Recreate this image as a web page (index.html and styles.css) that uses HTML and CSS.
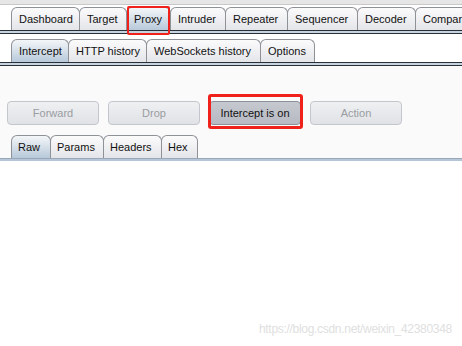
FILE: index.html
```html
<!DOCTYPE html>
<html lang="en">
<head>
    <meta charset="UTF-8">
    <title>Burp Proxy</title>
    <link rel="stylesheet" href="styles.css">
</head>
<body>
    <div class="top-strip"></div>

    <div class="tabs main-tabs">
        <div class="tab">Dashboard</div>
        <div class="tab">Target</div>
        <div class="tab selected marked">Proxy</div>
        <div class="tab">Intruder</div>
        <div class="tab">Repeater</div>
        <div class="tab">Sequencer</div>
        <div class="tab">Decoder</div>
        <div class="tab">Comparer</div>
    </div>
    <div class="tab-rule"></div>

    <div class="tabs sub-tabs">
        <div class="tab selected">Intercept</div>
        <div class="tab">HTTP history</div>
        <div class="tab">WebSockets history</div>
        <div class="tab">Options</div>
    </div>
    <div class="tab-rule"></div>

    <div class="intercept-panel">
        <div class="buttons">
            <div class="btn disabled">Forward</div>
            <div class="btn disabled">Drop</div>
            <div class="btn on marked-btn">Intercept is on</div>
            <div class="btn disabled">Action</div>
        </div>

        <div class="tabs msg-tabs">
            <div class="tab selected">Raw</div>
            <div class="tab">Params</div>
            <div class="tab">Headers</div>
            <div class="tab">Hex</div>
        </div>
    </div>
    <div class="msg-rule"></div>

    <div class="editor"></div>

    <div class="watermark">https://blog.csdn.net/weixin_42380348</div>
</body>
</html>
```

FILE: styles.css
```css
body {
    margin: 0;
    width: 462px;
    height: 346px;
    overflow: hidden;
    background: #ffffff;
    font-family: "Liberation Sans", Arial, sans-serif;
    font-size: 11px;
    color: #111;
    position: relative;
}
.top-strip {
    height: 4px;
    background: #e6e6e6;
    border-bottom: 1px solid #c8c8c8;
}
.tabs {
    display: flex;
    padding-left: 11px;
    white-space: nowrap;
}
.main-tabs {
    margin-top: 2px;
}
.sub-tabs {
    margin-top: 5px;
}
.tab {
    position: relative;
    flex: none;
    height: 22px;
    line-height: 22px;
    padding: 0 7px;
    border: 1px solid #8e9297;
    border-bottom: none;
    border-radius: 6px 6px 0 0;
    background: linear-gradient(#fbfbfc, #e4e5e9);
    margin-right: -1px;
}
.tab.selected {
    background: linear-gradient(#f4f6f8, #b7c9da);
}
.main-tabs .tab:nth-child(1) { width: 53px; }
.main-tabs .tab:nth-child(2) { width: 32px; }
.main-tabs .tab:nth-child(3) { width: 29px; }
.main-tabs .tab:nth-child(4) { width: 40px; }
.main-tabs .tab:nth-child(5) { width: 47px; }
.main-tabs .tab:nth-child(6) { width: 55px; }
.main-tabs .tab:nth-child(7) { width: 43px; }
.main-tabs .tab:nth-child(8) { width: 60px; }
.sub-tabs .tab:nth-child(1) { width: 42px; }
.sub-tabs .tab:nth-child(2) { width: 63px; }
.sub-tabs .tab:nth-child(3) { width: 99px; }
.sub-tabs .tab:nth-child(4) { width: 39px; }
.marked::after {
    content: "";
    position: absolute;
    left: 0;
    top: -2px;
    right: 0;
    bottom: -5px;
    border: 2px solid #f0201a;
    border-radius: 2px;
}
.tab-rule {
    height: 2px;
    background: #c6d4e2;
    border-top: 1px solid #2b2f36;
    border-bottom: 1px solid #2b2f36;
}
.intercept-panel {
    background: #fafafb;
    padding-top: 35px;
}
.buttons {
    display: flex;
    gap: 9px;
    padding-left: 7px;
}
.btn {
    position: relative;
    width: 90px;
    height: 22px;
    line-height: 22px;
    text-align: center;
    border: 1px solid #c3c6cc;
    border-radius: 4px;
    background: linear-gradient(#eef0f2, #e0e2e6);
}
.btn.disabled {
    color: #9a9ca1;
}
.btn.on {
    color: #111;
    border-color: #8d9099;
    background: linear-gradient(#c6c8cf, #b7bac3);
}
.marked-btn::after {
    content: "";
    position: absolute;
    left: -2px;
    top: -8px;
    right: -3px;
    bottom: -5px;
    border: 3px solid #f0201a;
    border-radius: 3px;
}
.msg-tabs {
    margin-top: 10px;
}
.msg-tabs .tab {
    height: 22px;
    line-height: 22px;
    padding: 0 6px;
}
.msg-tabs .tab:nth-child(1) { width: 26px; }
.msg-tabs .tab:nth-child(2) { width: 40px; }
.msg-tabs .tab:nth-child(3) { width: 45px; }
.msg-tabs .tab:nth-child(4) { width: 23px; }
.msg-rule {
    height: 2px;
    background: #b5c6d8;
    border-top: 1px solid #9aa7b6;
}
.watermark {
    position: absolute;
    right: 10px;
    bottom: 10px;
    font-size: 12px;
    letter-spacing: -0.3px;
    color: #e0e0e0;
    font-family: "Liberation Sans", Arial, sans-serif;
}
```
